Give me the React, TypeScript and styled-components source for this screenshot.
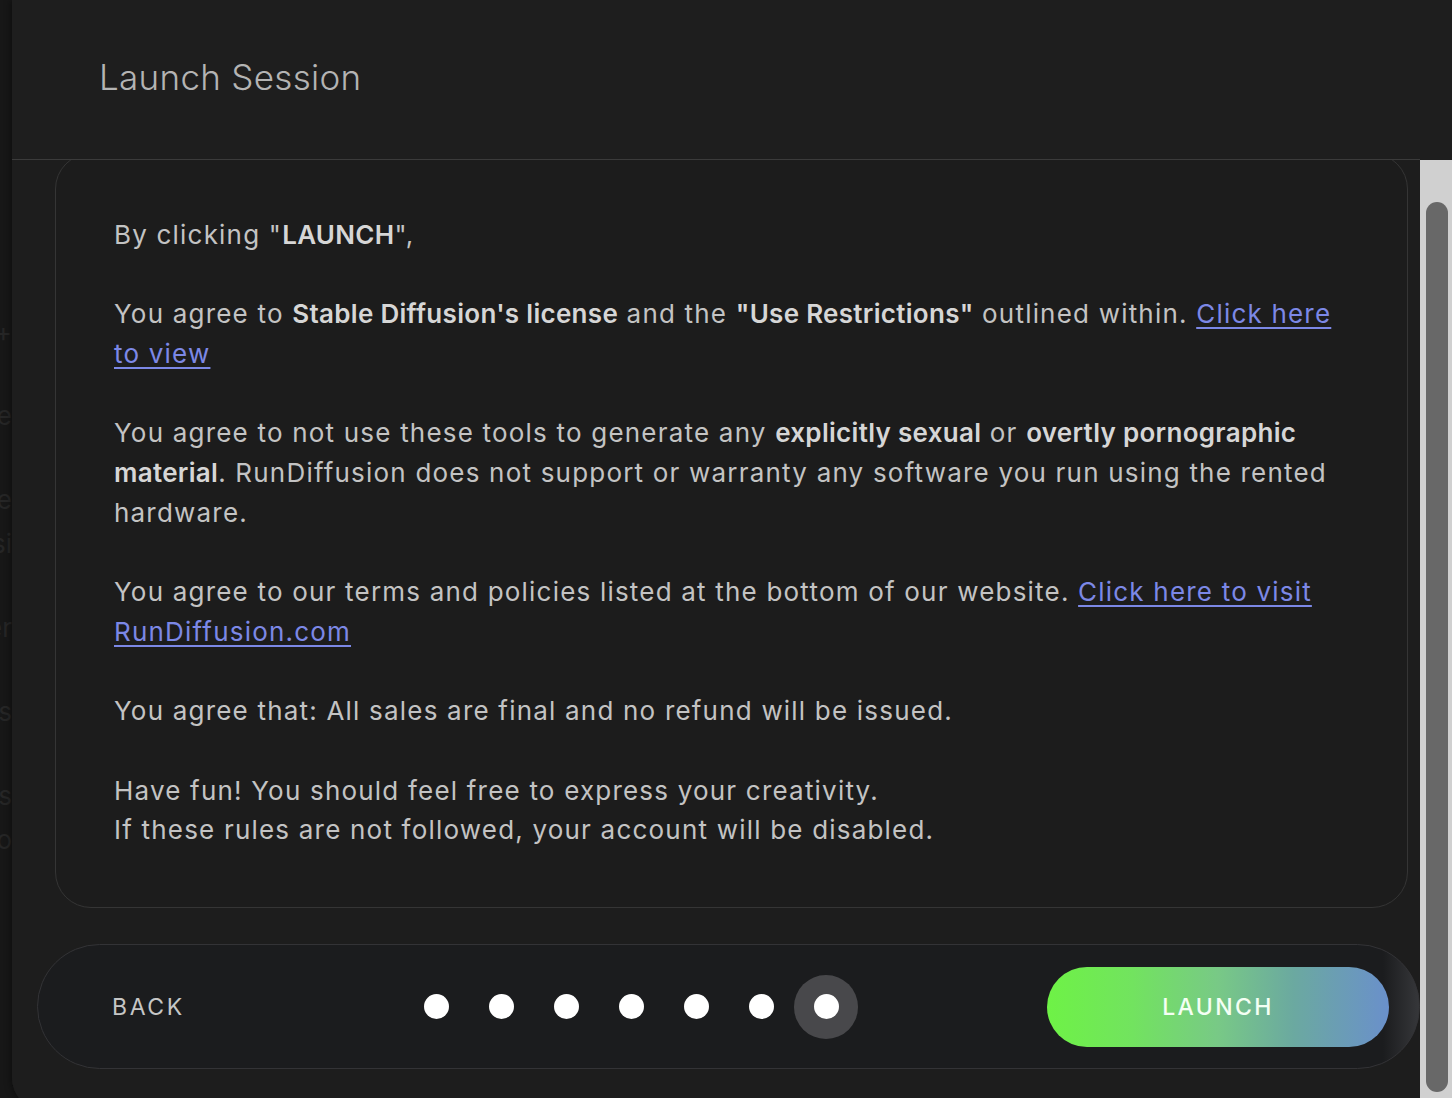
import React, { useLayoutEffect, useRef } from "react";
import styled, { createGlobalStyle } from "styled-components";

const FONT = `"Inter", "Lato", "Noto Sans", sans-serif`;

const Global = createGlobalStyle`
  html, body { margin: 0; padding: 0; }
  body {
    background: #171717;
    font-family: ${FONT};
    overflow: hidden;
    width: 1452px;
    height: 1098px;
  }
`;

const Page = styled.div`
  position: relative;
  width: 1452px;
  height: 1098px;
  background: #171717;
  overflow: hidden;
`;

const SideMenu = styled.nav`
  width: 12px;
  height: 100%;
  overflow: hidden;
  display: flex;
  flex-direction: column;
  align-items: flex-end;
  padding-top: 310px;
  box-sizing: border-box;
`;

const SideItem = styled.span<{ $gap: number }>`
  display: block;
  font-size: 26px;
  line-height: 44px;
  color: #262626;
  white-space: nowrap;
  margin-bottom: ${(p) => p.$gap}px;
`;

const Modal = styled.section`
  position: absolute;
  left: 12px;
  top: 0;
  right: 0;
  bottom: -12px;
  background: #1e1e1e;
  border-bottom-left-radius: 32px;
  box-shadow: -2px 0 6px rgba(0, 0, 0, 0.35);
  display: flex;
  flex-direction: column;
  overflow: hidden;
`;

const Header = styled.header`
  height: 160px;
  flex: none;
  display: flex;
  align-items: center;
  padding-left: 87px;
  padding-bottom: 6px;
  box-sizing: border-box;
  border-bottom: 1px solid #3b3b3b;
  margin-right: 32px;
`;

const Title = styled.h1`
  margin: 0;
  font-family: ${FONT};
  font-weight: 300;
  font-size: 35px;
  letter-spacing: 0.3px;
  color: #b4b4b4;
`;

const Body = styled.div`
  flex: 1;
  min-height: 0;
  display: flex;
  background: #1d1d1d;
`;

const Viewport = styled.div`
  flex: 1;
  min-width: 0;
  overflow: hidden;
`;

const ScrollTrack = styled.div`
  flex: none;
  width: 32px;
  background: #d0d0d0;
  box-sizing: border-box;
  padding: 42px 4px 0 6px;
`;

const ScrollThumb = styled.div`
  height: 890px;
  border-radius: 12px;
  background: #686868;
`;

const Content = styled.div`
  padding: 38px 0 60px 0;
  display: flex;
  flex-direction: column;
`;

const Card = styled.article`
  margin-left: 43px;
  margin-right: 12px;
  border: 1px solid #353535;
  border-radius: 36px;
  background: #1c1c1c;
  padding: 61px 52px 57px 58px;
`;

const Terms = styled.div`
  font-family: ${FONT};
  font-size: 26px;
  line-height: 39.7px;
  letter-spacing: 1.2px;
  color: #c3c3c3;
  font-weight: 400;
`;

const Para = styled.p`
  margin: 0 0 39.7px 0;
  &:last-child { margin-bottom: 0; }
`;

const Strong = styled.b`
  font-weight: 600;
  color: #d6d6d6;
  letter-spacing: 0.3px;
`;

const Link = styled.a`
  color: #7c88e6;
  text-decoration: underline;
  text-underline-offset: 4px;
  text-decoration-thickness: 1.5px;
`;

const Footer = styled.footer`
  margin: 36px 0 0 25px;
  width: 1383px;
  height: 125px;
  box-sizing: border-box;
  border: 1px solid #333336;
  border-radius: 63px;
  background: linear-gradient(90deg, #1b1c1e 0, #1b1c1e calc(100% - 36px), #36373a 100%);
  display: flex;
  align-items: center;
  padding: 0 30px 0 74px;
`;

const BackButton = styled.button`
  width: 292px;
  text-align: left;
  background: none;
  border: none;
  padding: 0;
  font-family: ${FONT};
  font-size: 23px;
  letter-spacing: 2.6px;
  color: #c6c6c6;
  font-weight: 400;
`;

const Dots = styled.div`
  display: flex;
  align-items: center;
`;

const DotSlot = styled.span<{ $active?: boolean }>`
  width: 64px;
  height: 64px;
  margin-right: 1px;
  border-radius: 50%;
  display: flex;
  align-items: center;
  justify-content: center;
  background: ${(p) => (p.$active ? "#48484b" : "transparent")};
`;

const Dot = styled.span`
  width: 25px;
  height: 25px;
  border-radius: 50%;
  background: #ffffff;
`;

const LaunchButton = styled.button`
  margin-left: auto;
  width: 342px;
  height: 80px;
  border: none;
  border-radius: 40px;
  background: linear-gradient(90deg, #6ef246 0%, #72e35f 25%, #78c986 50%, #6ba9a0 72%, #6a90cb 100%);
  font-family: ${FONT};
  font-size: 23px;
  font-weight: 500;
  letter-spacing: 2.4px;
  color: #f4fff4;
`;

export default function App() {
  const viewRef = useRef<HTMLDivElement>(null);
  useLayoutEffect(() => {
    if (viewRef.current) viewRef.current.scrollTop = 45;
  }, []);
  return (
    <>
      <Global />
      <Page>
        <SideMenu>
          <SideItem $gap={40}>+</SideItem>
          <SideItem $gap={40}>Create</SideItem>
          <SideItem $gap={0}>Base</SideItem>
          <SideItem $gap={40}>Sessi</SideItem>
          <SideItem $gap={40}>Server</SideItem>
          <SideItem $gap={40}>Files</SideItem>
          <SideItem $gap={0}>Tools</SideItem>
          <SideItem $gap={0}>Info</SideItem>
        </SideMenu>
        <Modal>
          <Header>
            <Title>Launch Session</Title>
          </Header>
          <Body>
            <Viewport ref={viewRef}>
              <Content>
                <Card>
                  <Terms>
                    <Para>
                      By clicking "<Strong>LAUNCH</Strong>",
                    </Para>
                    <Para>
                      You agree to <Strong>Stable Diffusion's license</Strong> and the{" "}
                      <Strong>"Use Restrictions"</Strong> outlined within.{" "}
                      <Link href="#">Click here to view</Link>
                    </Para>
                    <Para>
                      You agree to not use these tools to generate any{" "}
                      <Strong>explicitly sexual</Strong> or <Strong>overtly pornographic material</Strong>.
                      RunDiffusion does not support or warranty any software you run using the rented
                      hardware.
                    </Para>
                    <Para>
                      You agree to our terms and policies listed at the bottom of our website.{" "}
                      <Link href="#">Click here to visit RunDiffusion.com</Link>
                    </Para>
                    <Para>You agree that: All sales are final and no refund will be issued.</Para>
                    <Para>
                      Have fun! You should feel free to express your creativity.
                      <br />
                      If these rules are not followed, your account will be disabled.
                    </Para>
                  </Terms>
                </Card>
                <Footer>
                  <BackButton>BACK</BackButton>
                  <Dots>
                    {[0, 1, 2, 3, 4, 5, 6].map((i) => (
                      <DotSlot key={i} $active={i === 6}>
                        <Dot />
                      </DotSlot>
                    ))}
                  </Dots>
                  <LaunchButton>LAUNCH</LaunchButton>
                </Footer>
              </Content>
            </Viewport>
            <ScrollTrack>
              <ScrollThumb />
            </ScrollTrack>
          </Body>
        </Modal>
      </Page>
    </>
  );
}
